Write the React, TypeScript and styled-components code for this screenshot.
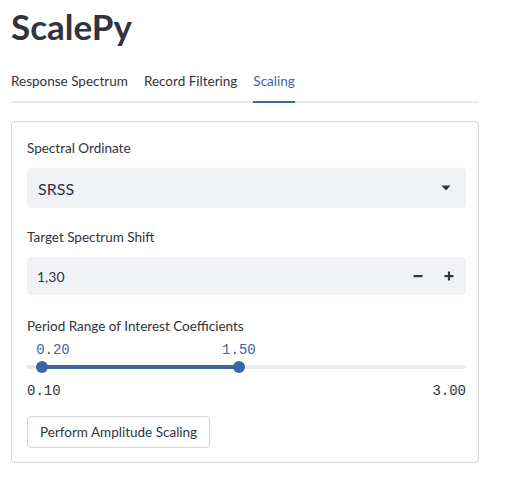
import React from "react";
import styled, { createGlobalStyle } from "styled-components";

const GlobalStyle = createGlobalStyle`
  body {
    margin: 0;
    background: #ffffff;
    color: #31333f;
    font-family: "Source Sans Pro", Lato, "Noto Sans", sans-serif;
  }
`;

const primary = "#3d65a5";

const tabs = ["Response Spectrum", "Record Filtering", "Scaling"];
const range = { min: 0.1, max: 3.0, low: 0.2, high: 1.5 };

const App = () => {
  const pct = (v: number) => ((v - range.min) / (range.max - range.min)) * 100;

  return (
    <>
      <GlobalStyle />
      <Page>
        <Title>ScalePy</Title>

        <TabList>
          {tabs.map((t) => (
            <Tab key={t} $active={t === "Scaling"}>
              {t}
            </Tab>
          ))}
        </TabList>

        <Card>
          <Field>
            <Label>Spectral Ordinate</Label>
            <Select>
              <span>SRSS</span>
              <Caret viewBox="0 0 10 6">
                <path d="M0.5 0.5h9L5 5.5z" fill="#31333f" />
              </Caret>
            </Select>
          </Field>

          <Field>
            <Label>Target Spectrum Shift</Label>
            <NumberInput>
              <span>1,30</span>
              <Steppers>
                <StepButton aria-label="minus">
                  <svg width="10" height="10" viewBox="0 0 10 10">
                    <rect x="0.5" y="4" width="9" height="2.2" fill="#31333f" />
                  </svg>
                </StepButton>
                <StepButton aria-label="plus">
                  <svg width="10" height="10" viewBox="0 0 10 10">
                    <rect x="0.5" y="4" width="9" height="2.2" fill="#31333f" />
                    <rect x="3.9" y="0.5" width="2.2" height="9" fill="#31333f" />
                  </svg>
                </StepButton>
              </Steppers>
            </NumberInput>
          </Field>

          <Field $offset={2}>
            <Label $tight>Period Range of Interest Coefficients</Label>
            <Slider>
              <ValueRow>
                <ThumbValue style={{ left: `calc(${pct(range.low)}% - 6px)` }}>
                  {range.low.toFixed(2)}
                </ThumbValue>
                <ThumbValue
                  style={{ left: `${pct(range.high)}%`, transform: "translateX(-50%)" }}
                >
                  {range.high.toFixed(2)}
                </ThumbValue>
              </ValueRow>
              <Track>
                <Fill
                  style={{
                    left: `${pct(range.low)}%`,
                    width: `${pct(range.high) - pct(range.low)}%`,
                  }}
                />
                <Thumb style={{ left: `${pct(range.low)}%` }} />
                <Thumb style={{ left: `${pct(range.high)}%` }} />
              </Track>
              <TickRow>
                <span>{range.min.toFixed(2)}</span>
                <span>{range.max.toFixed(2)}</span>
              </TickRow>
            </Slider>
          </Field>

          <Button>Perform Amplitude Scaling</Button>
        </Card>
      </Page>
    </>
  );
};

export default App;

const Page = styled.main`
  width: 468px;
  padding: 0 0 0 11px;
`;

const Title = styled.h1`
  margin: 0;
  padding-top: 5px;
  height: 57px;
  font-size: 35px;
  font-weight: 700;
  line-height: 42px;
  color: #31333f;
`;

const TabList = styled.nav`
  display: flex;
  gap: 16px;
  border-bottom: 2px solid #e9e9eb;
`;

const Tab = styled.div<{ $active?: boolean }>`
  height: 39px;
  line-height: 39px;
  font-size: 13.5px;
  color: ${({ $active }) => ($active ? primary : "#31333f")};
  box-shadow: ${({ $active }) => ($active ? `0 2px 0 ${primary}` : "none")};
`;

const Card = styled.section`
  margin-top: 18px;
  padding: 16px 12px 14px 15px;
  border: 1px solid #d6d6d9;
  border-radius: 4px;
  display: flex;
  flex-direction: column;
  gap: 19px;
`;

const Field = styled.div<{ $offset?: number }>`
  display: flex;
  flex-direction: column;
  margin-top: ${({ $offset }) => $offset ?? 0}px;
`;

const Label = styled.label<{ $tight?: boolean }>`
  height: 20px;
  line-height: 20px;
  font-size: 13.5px;
  margin-bottom: ${({ $tight }) => ($tight ? "0" : "10px")};
`;

const Select = styled.div`
  height: 40px;
  display: flex;
  align-items: center;
  justify-content: space-between;
  padding: 0 15px 0 11px;
  border-radius: 4px;
  background: #f0f2f6;
  font-size: 16px;
`;

const Caret = styled.svg`
  width: 10px;
  height: 6px;
`;

const NumberInput = styled.div`
  height: 38px;
  display: flex;
  align-items: center;
  justify-content: space-between;
  padding: 0 2px 0 10px;
  border-radius: 4px;
  background: #f0f2f6;
  font-size: 14px;
`;

const Steppers = styled.div`
  display: flex;
  height: 100%;
`;

const StepButton = styled.button`
  width: 31px;
  height: 100%;
  border: none;
  background: transparent;
  display: flex;
  align-items: center;
  justify-content: center;
  padding: 0;
`;

const Slider = styled.div`
  display: flex;
  flex-direction: column;
`;

const ValueRow = styled.div`
  position: relative;
  height: 29px;
`;

const mono = `"Liberation Mono", "DejaVu Sans Mono", monospace`;

const ThumbValue = styled.span`
  position: absolute;
  top: 4px;
  font-family: ${mono};
  font-size: 14px;
  line-height: 20px;
  color: ${primary};
`;

const Track = styled.div`
  position: relative;
  height: 4px;
  border-radius: 2px;
  background: #e6eaf1;
`;

const Fill = styled.div`
  position: absolute;
  top: 0;
  height: 4px;
  background: ${primary};
`;

const Thumb = styled.div`
  position: absolute;
  top: -4px;
  width: 12px;
  height: 12px;
  margin-left: -6px;
  border-radius: 50%;
  background: ${primary};
`;

const TickRow = styled.div`
  display: flex;
  justify-content: space-between;
  margin-top: 12px;
  font-family: ${mono};
  font-size: 14px;
  line-height: 20px;
  color: #31333f;
`;

const Button = styled.button`
  align-self: flex-start;
  margin-top: -4px;
  height: 32px;
  padding: 0 12px;
  border: 1px solid #d6d6d9;
  border-radius: 4px;
  background: #ffffff;
  color: #31333f;
  font-family: inherit;
  font-size: 13.5px;
`;
